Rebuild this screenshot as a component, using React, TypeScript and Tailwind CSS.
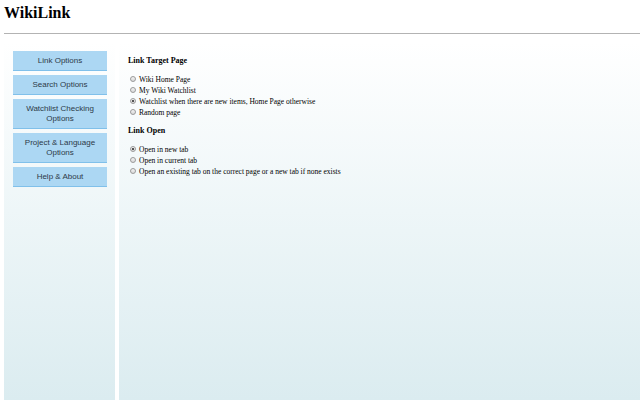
import React from "react";

const buttons: { label: string[]; tall?: boolean }[] = [
  { label: ["Link Options"] },
  { label: ["Search Options"] },
  { label: ["Watchlist Checking", "Options"], tall: true },
  { label: ["Project & Language", "Options"], tall: true },
  { label: ["Help & About"] },
];

function Radio({ label, checked }: { label: string; checked?: boolean }) {
  return (
    <div className="flex items-center h-[11px] leading-[11px] text-[7.5px]">
      <span className="ml-[2px] mr-[3px] w-[6px] h-[6px] rounded-full border border-[#9a9a9a] bg-gradient-to-b from-[#f4f4f4] to-[#d8d8d8] flex items-center justify-center">
        {checked && <span className="w-[2px] h-[2px] rounded-full bg-[#222]" />}
      </span>
      <span>{label}</span>
    </div>
  );
}

export default function App() {
  return (
    <div className="w-[640px] h-[400px] overflow-hidden bg-white pl-[4px] font-['Liberation_Serif',serif] text-black">
      <h1 className="pt-[5px] h-[21px] text-[16px] leading-[16px] font-bold">WikiLink</h1>
      <div className="mt-[12px] h-[1px] bg-[#b3b3b3]" />
      <div className="mt-[8px] flex gap-[4px] h-[358px]">
        <div className="w-[111px] bg-gradient-to-b from-[#ffffff] to-[#dbecf0] pt-[9px] pl-[9px] pr-[8px] flex flex-col gap-[4px]">
          {buttons.map((b) => (
            <div
              key={b.label.join(" ")}
              className={`${b.tall ? "h-[30px]" : "h-[20px]"} bg-[#acd7f3] border-b border-[#80c0ea] flex flex-col items-center justify-center font-['Liberation_Sans',sans-serif] text-[8px] leading-[10px] text-[#2c3a48]`}
            >
              {b.label.map((l) => (
                <span key={l}>{l}</span>
              ))}
            </div>
          ))}
        </div>
        <div className="flex-1 bg-gradient-to-b from-[#ffffff] to-[#dbecf0] pl-[9px] pt-[12.5px] text-[8px]">
          <div className="font-bold h-[11px] leading-[11px]">Link Target Page</div>
          <div className="mt-[8px]">
            <Radio label="Wiki Home Page" />
            <Radio label="My Wiki Watchlist" />
            <Radio label="Watchlist when there are new items, Home Page otherwise" checked />
            <Radio label="Random page" />
          </div>
          <div className="mt-[7px] font-bold h-[11px] leading-[11px]">Link Open</div>
          <div className="mt-[8px]">
            <Radio label="Open in new tab" checked />
            <Radio label="Open in current tab" />
            <Radio label="Open an existing tab on the correct page or a new tab if none exists" />
          </div>
        </div>
      </div>
    </div>
  );
}
